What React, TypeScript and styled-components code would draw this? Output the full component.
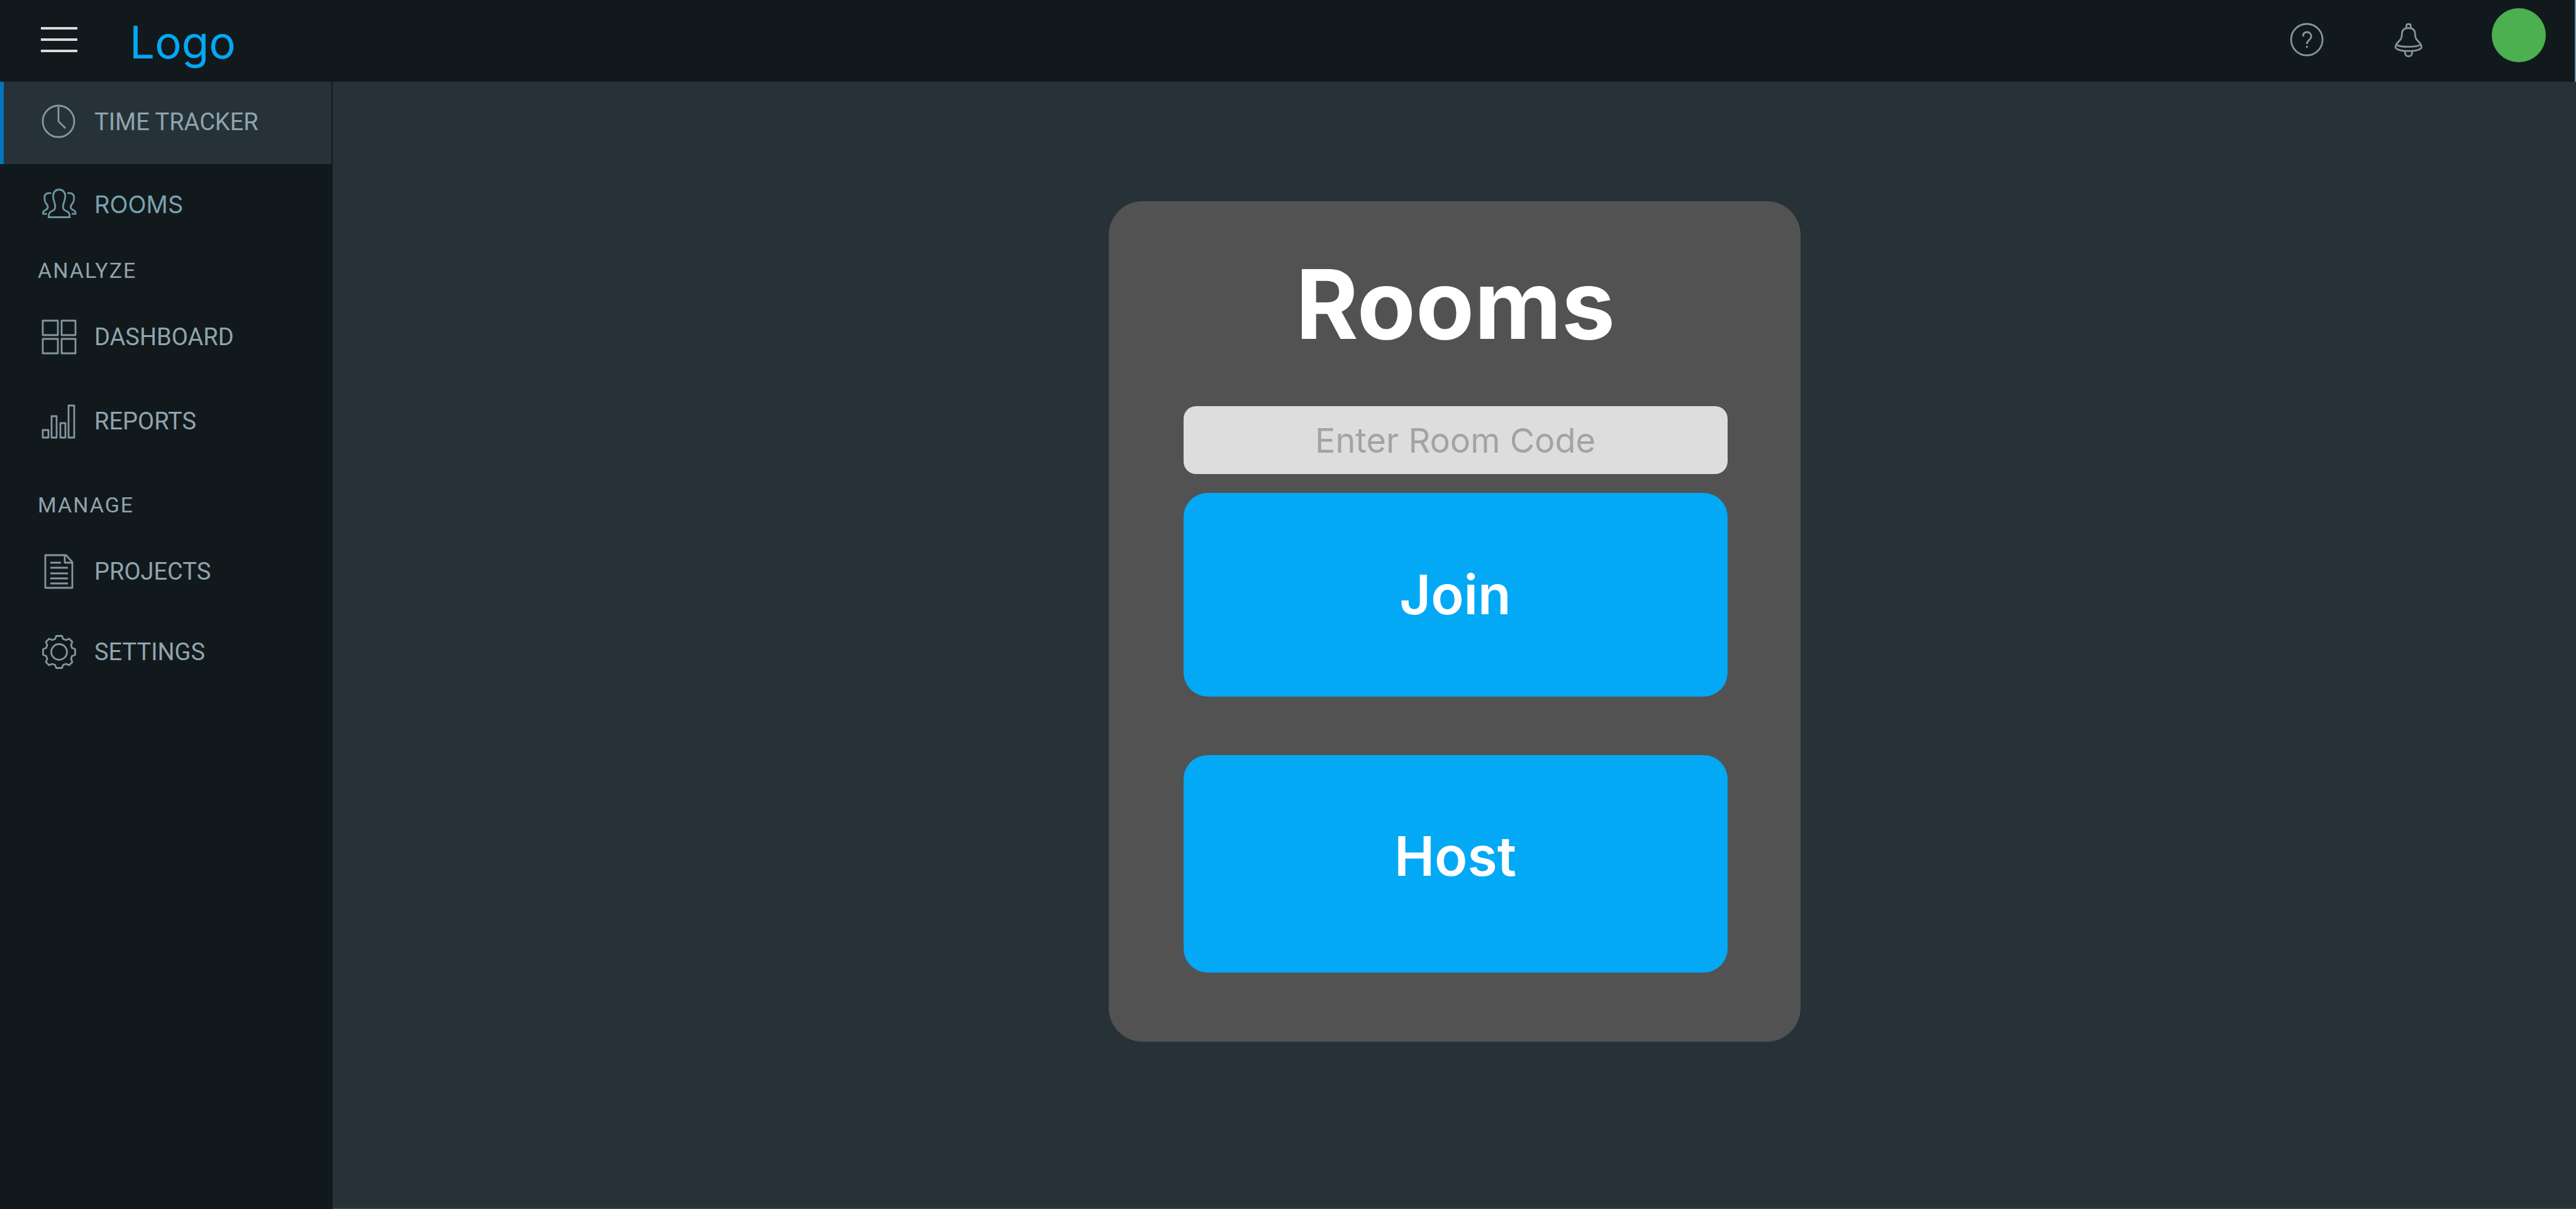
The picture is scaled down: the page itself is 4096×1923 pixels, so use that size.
import React from "react";
import styled, { createGlobalStyle } from "styled-components";

const GlobalStyle = createGlobalStyle`
  *, *::before, *::after { box-sizing: border-box; }
  html, body { margin: 0; background: #263238; }
`;

const inter = `Inter, "Liberation Sans", sans-serif`;
const roboto = `Roboto, "Liberation Sans", sans-serif`;

const Page = styled.div`
  min-height: 100vh;
  display: flex;
  flex-direction: column;
  background: #263238;
  font-family: ${inter};
`;

const TopBar = styled.header`
  display: flex;
  align-items: flex-start;
  height: 130px;
  padding: 0 46px 0 65px;
  background: #12191c;
  border-right: 2px solid #6b98a5;
`;

const MenuButton = styled.button`
  display: flex;
  flex-direction: column;
  gap: 14px;
  width: 58px;
  margin-top: 43px;
  padding: 0;
  border: 0;
  background: none;
`;

const MenuBar = styled.span`
  height: 4px;
  width: 100%;
  background: #dbdbdb;
`;

const Logo = styled.a`
  margin: 24px auto 0 83px;
  font-size: 71px;
  line-height: 87px;
  color: #03a9f5;
  text-decoration: none;
`;

const IconButton = styled.button<{ $gap: number }>`
  display: flex;
  margin: 36px ${(p) => p.$gap}px 0 0;
  padding: 0;
  border: 0;
  background: none;
  color: #90a4ae;
`;

const Avatar = styled.button`
  width: 86px;
  height: 86px;
  margin-top: 13px;
  padding: 0;
  border: 0;
  border-radius: 50%;
  background: #4caf50;
`;

const Body = styled.div`
  flex: 1;
  display: flex;
`;

const Sidebar = styled.nav`
  width: 529px;
  flex: none;
  border-right: 2px solid #12191c;
  background: #12191c;
`;

const NavLink = styled.a<{ $active?: boolean; $light?: boolean }>`
  display: flex;
  align-items: center;
  gap: 28px;
  height: ${(p) => (p.$active ? 131 : 128)}px;
  padding: ${(p) => (p.$active ? "0 0 4px 60px" : p.$light ? "0 0 0 60px" : "2px 0 0 60px")};
  border-left: 6px solid ${(p) => (p.$active ? "#0277bd" : "transparent")};
  background: ${(p) => (p.$active ? "#263238" : "transparent")};
  color: ${(p) => (p.$light ? "#78a3b0" : "#90a4ae")};
  font-family: ${(p) => (p.$light ? inter : roboto)};
  font-size: 38px;
  line-height: 48px;
  text-decoration: none;
`;

const NavGroup = styled.div`
  display: flex;
  flex-direction: column;
  gap: 6px;
`;

const GroupTitle = styled.h2<{ $top: number }>`
  margin: ${(p) => p.$top}px 0 21px 60px;
  font-family: ${roboto};
  font-size: 34px;
  line-height: 40px;
  font-weight: 400;
  letter-spacing: 2px;
  color: #90a4ae;
`;

const Main = styled.main`
  flex: 1;
  display: flex;
  justify-content: center;
  align-items: flex-start;
  padding: 190px 40px 40px;
  border-bottom: 2px solid #423f42;
`;

const Card = styled.form`
  display: flex;
  flex-direction: column;
  width: 1100px;
  padding: 74px 116px 110px 119px;
  border-radius: 54px;
  background: #525252;
`;

const Title = styled.h1`
  margin: 0;
  font-size: 152px;
  line-height: 180px;
  font-weight: 700;
  text-align: center;
  color: #fff;
`;

const CodeInput = styled.input`
  width: 100%;
  height: 108px;
  margin: 72px 0 30px;
  padding: 0 20px;
  border: 0;
  border-radius: 20px;
  background: #ddd;
  font-family: ${inter};
  font-size: 54px;
  text-align: center;
  color: #525252;
  &::placeholder { color: #a3a3a3; opacity: 1; }
`;

const ActionButton = styled.button`
  height: 324px;
  padding: 0;
  border: 0;
  border-radius: 38px;
  background: #03a9f5;
  font-family: ${inter};
  font-size: 86px;
  font-weight: 600;
  color: #fff;
`;

const HostButton = styled(ActionButton)`
  height: 346px;
  margin-top: 93px;
  padding-bottom: 24px;
`;

const Svg = ({ children, w = 56, h = 56 }: { children: React.ReactNode; w?: number; h?: number }) => (
  <svg width={w} height={h} viewBox={`0 0 ${w} ${h}`} fill="none" stroke="currentColor" strokeWidth={2.8} strokeLinejoin="round" opacity={0.9} aria-hidden="true">
    {children}
  </svg>
);

const ClockIcon = () => (
  <Svg>
    <circle cx="27" cy="27" r="25" />
    <path d="M27 4V27L38 38" />
  </Svg>
);

const PeopleIcon = () => (
  <Svg>
    <path d="M28 4.5C22 4.5 18.5 9 18.5 15C18.5 22 21.5 25 21.8 31C22 36 20 37 17 38.5C13 40 11.5 42 11.3 48.5H45C44.8 42 43 40 39 38.5C36 37 34 36 34.3 31C34.6 25 37.8 22 37.8 15C37.8 9 34 4.5 28 4.5Z" />
    <path d="M15.5 10.4C8 9.5 4.8 12 4.8 17C4.8 25 6.5 25 9.5 30C11.5 34 8.5 36 5.5 37.5C2.5 39 2.4 40 2.4 43.2H8.5" />
    <path d="M41 10.4C48.5 9.5 51.7 12 51.7 17C51.7 25 50 25 47 30C45 34 48 36 51 37.5C54 39 54.1 40 54.1 43.2H48" />
  </Svg>
);

const GridIcon = () => (
  <Svg>
    <path d="M2 2h24v23H2zM32 2h22v23H32zM2 31h24v23H2zM32 31h22v23H32z" />
  </Svg>
);

const ChartIcon = () => (
  <Svg>
    <path d="M2 42h9v12H2zM16 20h8v34H16zM30 31h8v23H30zM43 3h9v51H43z" />
  </Svg>
);

const FileIcon = () => (
  <Svg>
    <path d="M6 2h33l10 11v41H6zM37 2v12h12" />
    <path d="M14 14h17M14 22h28M14 31h28M14 39h28M14 47h28" />
  </Svg>
);

const GearIcon = () => (
  <Svg>
    <circle cx="28" cy="28" r="12.5" />
    <path d="M23.5 2.5H32.5L34.5 7.5L39 9L44 7L49 12L47 17L48.5 21.5L53.5 23.5V32.5L48.5 34.5L47 39L49 44L44 49L39 47L34.5 48.5L32.5 53.5H23.5L21.5 48.5L17 47L12 49L7 44L9 39L7.5 34.5L2.5 32.5V23.5L7.5 21.5L9 17L7 12L12 7L17 9L21.5 7.5Z" />
  </Svg>
);

const HelpIcon = () => (
  <Svg w={54} h={54}>
    <circle cx="27" cy="27" r="25" />
    <path d="M21 22c0-5 3-7 6.500-7s6.500 3 6.500 7c0 5-7 6-7 12M27 37v3" />
  </Svg>
);

const BellIcon = () => (
  <Svg w={46} h={56}>
    <path d="M19.2 9V5C19.2 1.3 26.2 1.3 26.2 5V9" />
    <path d="M22.7 8.6C16 8.6 12.4 12 12.2 18C12 24 11 26 7.5 29.5C4 33 2 35 2 39.5C4 43 11 45.2 22.7 45.2C34.4 45.2 41.4 43 43.4 39.5C43.4 35 41.4 33 37.9 29.5C34.4 26 33.4 24 33.2 18C33 12 29.4 8.6 22.7 8.6Z" />
    <path d="M3.5 35C9 39.5 36.4 39.5 41.9 35M17.2 45.5V48C17.2 55.5 28.4 55.5 28.4 48V45.5" />
  </Svg>
);

export default function App() {
  return (
    <>
      <GlobalStyle />
      <Page>
        <TopBar>
          <MenuButton type="button" aria-label="Menu">
            <MenuBar />
            <MenuBar />
            <MenuBar />
          </MenuButton>
          <Logo href="#">Logo</Logo>
          <IconButton type="button" aria-label="Help" $gap={112}><HelpIcon /></IconButton>
          <IconButton type="button" aria-label="Notifications" $gap={109}><BellIcon /></IconButton>
          <Avatar type="button" aria-label="Account" />
        </TopBar>
        <Body>
          <Sidebar>
            <NavLink href="#" $active><ClockIcon />TIME TRACKER</NavLink>
            <NavLink href="#" $light><PeopleIcon />ROOMS</NavLink>
            <GroupTitle $top={21}>ANALYZE</GroupTitle>
            <NavGroup>
              <NavLink href="#"><GridIcon />DASHBOARD</NavLink>
              <NavLink href="#"><ChartIcon />REPORTS</NavLink>
            </NavGroup>
            <GroupTitle $top={50}>MANAGE</GroupTitle>
            <NavLink href="#"><FileIcon />PROJECTS</NavLink>
            <NavLink href="#"><GearIcon />SETTINGS</NavLink>
          </Sidebar>
          <Main>
            <Card onSubmit={(e) => e.preventDefault()}>
              <Title>Rooms</Title>
              <CodeInput type="text" placeholder="Enter Room Code" aria-label="Room code" />
              <ActionButton type="submit">Join</ActionButton>
              <HostButton type="button">Host</HostButton>
            </Card>
          </Main>
        </Body>
      </Page>
    </>
  );
}
